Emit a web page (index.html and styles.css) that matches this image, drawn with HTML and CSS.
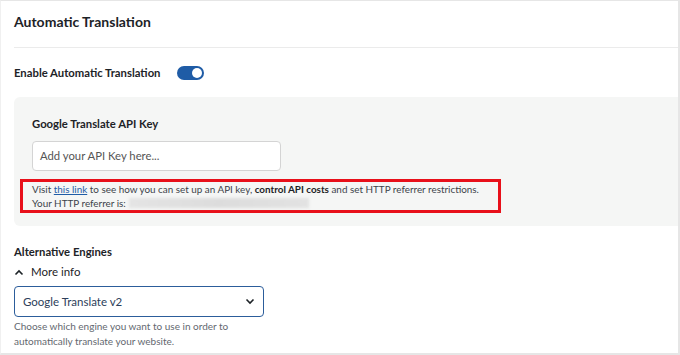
FILE: index.html
```html
<!DOCTYPE html>
<html>
<head>
<meta charset="utf-8">
<link rel="stylesheet" href="styles.css">
</head>
<body>
<div class="card">
  <h2 class="title">Automatic Translation</h2>
  <div class="row">
    <span class="label">Enable Automatic Translation</span>
    <span class="toggle"><span class="knob"></span></span>
  </div>
  <div class="panel">
    <div class="plabel">Google Translate API Key</div>
    <div class="input">Add your API Key here...</div>
    <div class="notice">
      <div>Visit <a href="#">this link</a> to see how you can set up an API key, <b>control API costs</b> and set HTTP referrer restrictions.</div>
      <div class="ref">Your HTTP referrer is: <span class="blur"></span></div>
    </div>
  </div>
  <div class="alt">
    <div class="label">Alternative Engines</div>
    <div class="more"><svg width="10" height="7" viewBox="0 0 10 7"><path d="M1.5 5.5 L5 2 L8.5 5.5" fill="none" stroke="#1d2327" stroke-width="1.6"/></svg><span>More info</span></div>
    <div class="select"><span>Google Translate v2</span><svg width="10" height="7" viewBox="0 0 10 7"><path d="M1.5 1.5 L5 5 L8.5 1.5" fill="none" stroke="#1d2327" stroke-width="1.6"/></svg></div>
    <div class="help">Choose which engine you want to use in order to<br>automatically translate your website.</div>
  </div>
</div>
</body>
</html>
```
FILE: styles.css
```css
* { box-sizing: border-box; }
body { margin: 0; background: #fff; font-family: "Lato", "Open Sans", sans-serif; color: #1d2327; }
.card { width: 680px; height: 355px; border: 1px solid #e6e6e6; border-left-color: #f0f0f0; border-bottom-width: 2px; border-right-width: 2px; padding: 0 0 0 13px; overflow: hidden; }
.title { margin: 0; font-size: 14px; font-weight: 700; line-height: 20px; padding: 11px 0 15px 0; border-bottom: 1px solid #ebebeb; color: #1d2327; }
.row { display: flex; align-items: center; height: 49px; padding-top: 0; }
.label { font-size: 11.3px; font-weight: 700; }
.toggle { margin-left: 16px; width: 27px; height: 14px; border-radius: 7px; background: #1f5ca6; display: flex; align-items: center; justify-content: flex-end; padding-right: 2px; }
.knob { width: 10px; height: 10px; border-radius: 50%; background: #fff; }
.panel { background: #f5f6f5; border-radius: 6px 0 0 6px; padding: 17px 0 13px 18px; }
.plabel { font-size: 11.3px; font-weight: 700; line-height: 20px; }
.input { margin-top: 7px; width: 249px; height: 30px; background: #fff; border: 1px solid #d4d4d4; border-radius: 4px; font-size: 11.3px; color: #555; padding: 0 0 0 7px; line-height: 28px; }
.notice { margin: 8px 0 0 -12px; width: 481px; border: 3px solid #e8101a; padding: 0 0 0 9px; font-size: 9.9px; line-height: 14px; color: #3c434a; white-space: nowrap; }
.notice a { color: #1f5ca6; }
.notice b { font-weight: 700; color: #1d2327; }
.ref { display: flex; align-items: center; gap: 3px; }
.blur { display: inline-block; width: 180px; height: 10px; background: linear-gradient(90deg, #e4e4e4, #dcdcdc 50%, #e2e2e2); filter: blur(1.5px); }
.alt { padding-top: 17px; }
.alt .label { display: block; line-height: 18px; }
.more { display: flex; align-items: center; gap: 7px; font-size: 11.5px; margin-top: 2px; line-height: 18px; }
.select { margin-top: 5px; width: 250px; height: 31px; border: 1px solid #2c5d9b; border-radius: 4px; display: flex; align-items: center; justify-content: space-between; padding: 0 8px 0 8px; font-size: 11.5px; color: #2c3e5a; }
.help { margin-top: 2px; font-size: 10px; line-height: 15px; color: #646970; }
```
